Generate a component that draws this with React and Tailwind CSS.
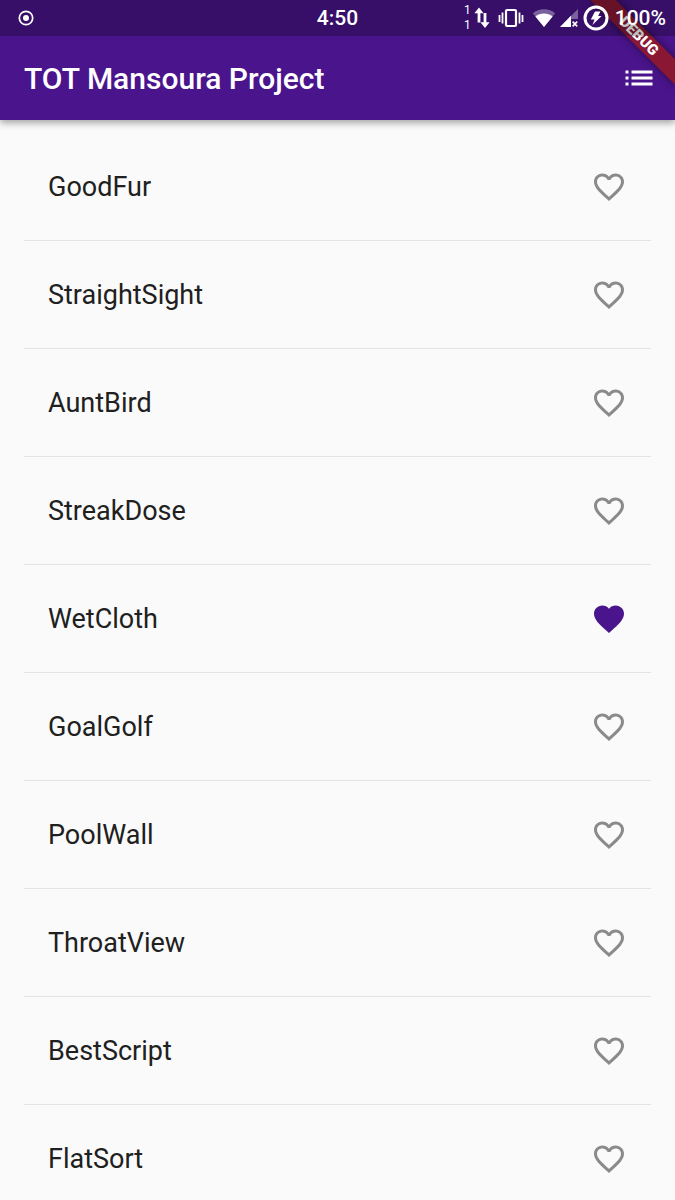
import React, { useState } from "react";
import { MdFavorite, MdFavoriteBorder, MdList } from "react-icons/md";

const words = [
  "GoodFur",
  "StraightSight",
  "AuntBird",
  "StreakDose",
  "WetCloth",
  "GoalGolf",
  "PoolWall",
  "ThroatView",
  "BestScript",
  "FlatSort",
];

function StatusBar() {
  return (
    <div className="relative z-10 grid h-9 grid-cols-[1fr_auto_1fr] items-center bg-black/25 px-[9px] text-[21px] leading-9 font-medium">
      <svg viewBox="0 0 16 16" className="ml-[9px] size-4">
        <circle cx="8" cy="8" r="6.7" fill="none" stroke="currentColor" strokeWidth="1.7" />
        <circle cx="8" cy="8" r="3" fill="currentColor" />
      </svg>

      <span>4:50</span>

      <div className="flex items-center justify-end">
        {/* network activity */}
        <div className="mr-[3px] flex flex-col text-[12px] leading-[15px] font-normal">
          <span>1</span>
          <span>1</span>
        </div>
        <svg viewBox="0 0 16 22" className="mr-2 h-[22px] w-4" fill="currentColor">
          <path d="M5 .5 L9.6 6.2 H6.4 V15.5 H3.6 V6.2 H.4 Z" />
          <path d="M11 21 L6.4 15.3 H9.6 V6 H12.4 V15.3 H15.6 Z" />
        </svg>

        {/* vibrate */}
        <svg viewBox="0 0 26 20" className="mr-2 h-5 w-[26px]" fill="currentColor">
          <path d="M.6 7h1.8v7H.6zM3.6 4.5h1.8v11H3.6zM20.6 4.5h1.8v11h-1.8zM23.6 7h1.8v7h-1.8z" />
          <rect x="8" y="2" width="10" height="16" rx="1" fill="none" stroke="currentColor" strokeWidth="2.2" />
        </svg>

        {/* wifi */}
        <svg viewBox="0 0 24 20" className="mr-1 h-5 w-6" fill="currentColor">
          <path d="M12 19 L.8 5.2 C4 2.6 7.8 1.2 12 1.2 S20 2.6 23.2 5.2 Z" fillOpacity=".35" />
          <path d="M12 19 L3.4 8.6 C5.8 6.8 8.7 5.6 12 5.6 S18.2 6.8 20.6 8.6 Z" />
        </svg>

        {/* mobile signal */}
        <svg viewBox="0 0 18 20" className="mr-[5px] h-5 w-[18px]" fill="currentColor">
          <path d="M18 1 V11 H11 V19 H0 Z" fillOpacity=".35" />
          <path d="M0 19 L11 7.8 V19 Z" />
          <path d="M12.6 13.6l4.6 4.8M17.2 13.6l-4.6 4.8" stroke="currentColor" strokeWidth="1.6" />
        </svg>

        {/* battery */}
        <svg viewBox="0 0 26 26" className="mr-[6px] size-[26px]" fill="currentColor">
          <circle cx="13" cy="13" r="11" fill="none" stroke="currentColor" strokeWidth="3" />
          <path d="M12 6.5 H17.4 L15.2 11 H18.6 L9.4 20 L11.6 14.6 H7.8 Z" />
        </svg>
        <span>100%</span>
      </div>
    </div>
  );
}

function WordRow({ word, saved, onToggle }) {
  return (
    <li className="flex h-27 items-center justify-between border-b border-[#e4e4e4] px-6">
      <span className="text-[27px] leading-9 text-[#202020]">{word}</span>
      <button type="button" aria-label={`Favorite ${word}`} aria-pressed={saved} onClick={onToggle}>
        {saved ? (
          <MdFavorite className="size-9 text-[#4a148c]" />
        ) : (
          <MdFavoriteBorder className="size-9 text-[#8a8a8a]" />
        )}
      </button>
    </li>
  );
}

export default function App() {
  const [saved, setSaved] = useState(["WetCloth"]);

  const toggle = (word) => {
    setSaved((prev) =>
      prev.includes(word) ? prev.filter((w) => w !== word) : [...prev, word]
    );
  };

  return (
    <div className="flex h-screen flex-col overflow-hidden bg-[#fafafa] font-[Roboto,sans-serif]">
      <header className="relative z-10 bg-[#4a148c] text-white shadow-[0_3px_7px_rgba(0,0,0,0.35)]">
        <StatusBar />
        <div className="flex h-21 items-center justify-between pl-6 pr-[18px]">
          <h1 className="text-[30px] leading-[37px] font-medium">TOT Mansoura Project</h1>
          <button type="button" aria-label="Saved words">
            <MdList className="size-9" />
          </button>
        </div>

        {/* corner ribbon */}
        <div className="pointer-events-none absolute top-0 right-0 size-24 overflow-hidden">
          <div className="absolute top-[27px] -right-6 h-[18px] w-[120px] rotate-45 bg-[#8a1834] text-center text-[15px] leading-[18px] font-black shadow-[0_0_9px_rgba(0,0,0,0.5)]">
            DEBUG
          </div>
        </div>
      </header>

      <main className="min-h-0 flex-1 overflow-y-auto [scrollbar-width:none]">
        <ul className="px-6 pt-[13px]">
          {words.map((word) => (
            <WordRow
              key={word}
              word={word}
              saved={saved.includes(word)}
              onToggle={() => toggle(word)}
            />
          ))}
        </ul>
      </main>
    </div>
  );
}
